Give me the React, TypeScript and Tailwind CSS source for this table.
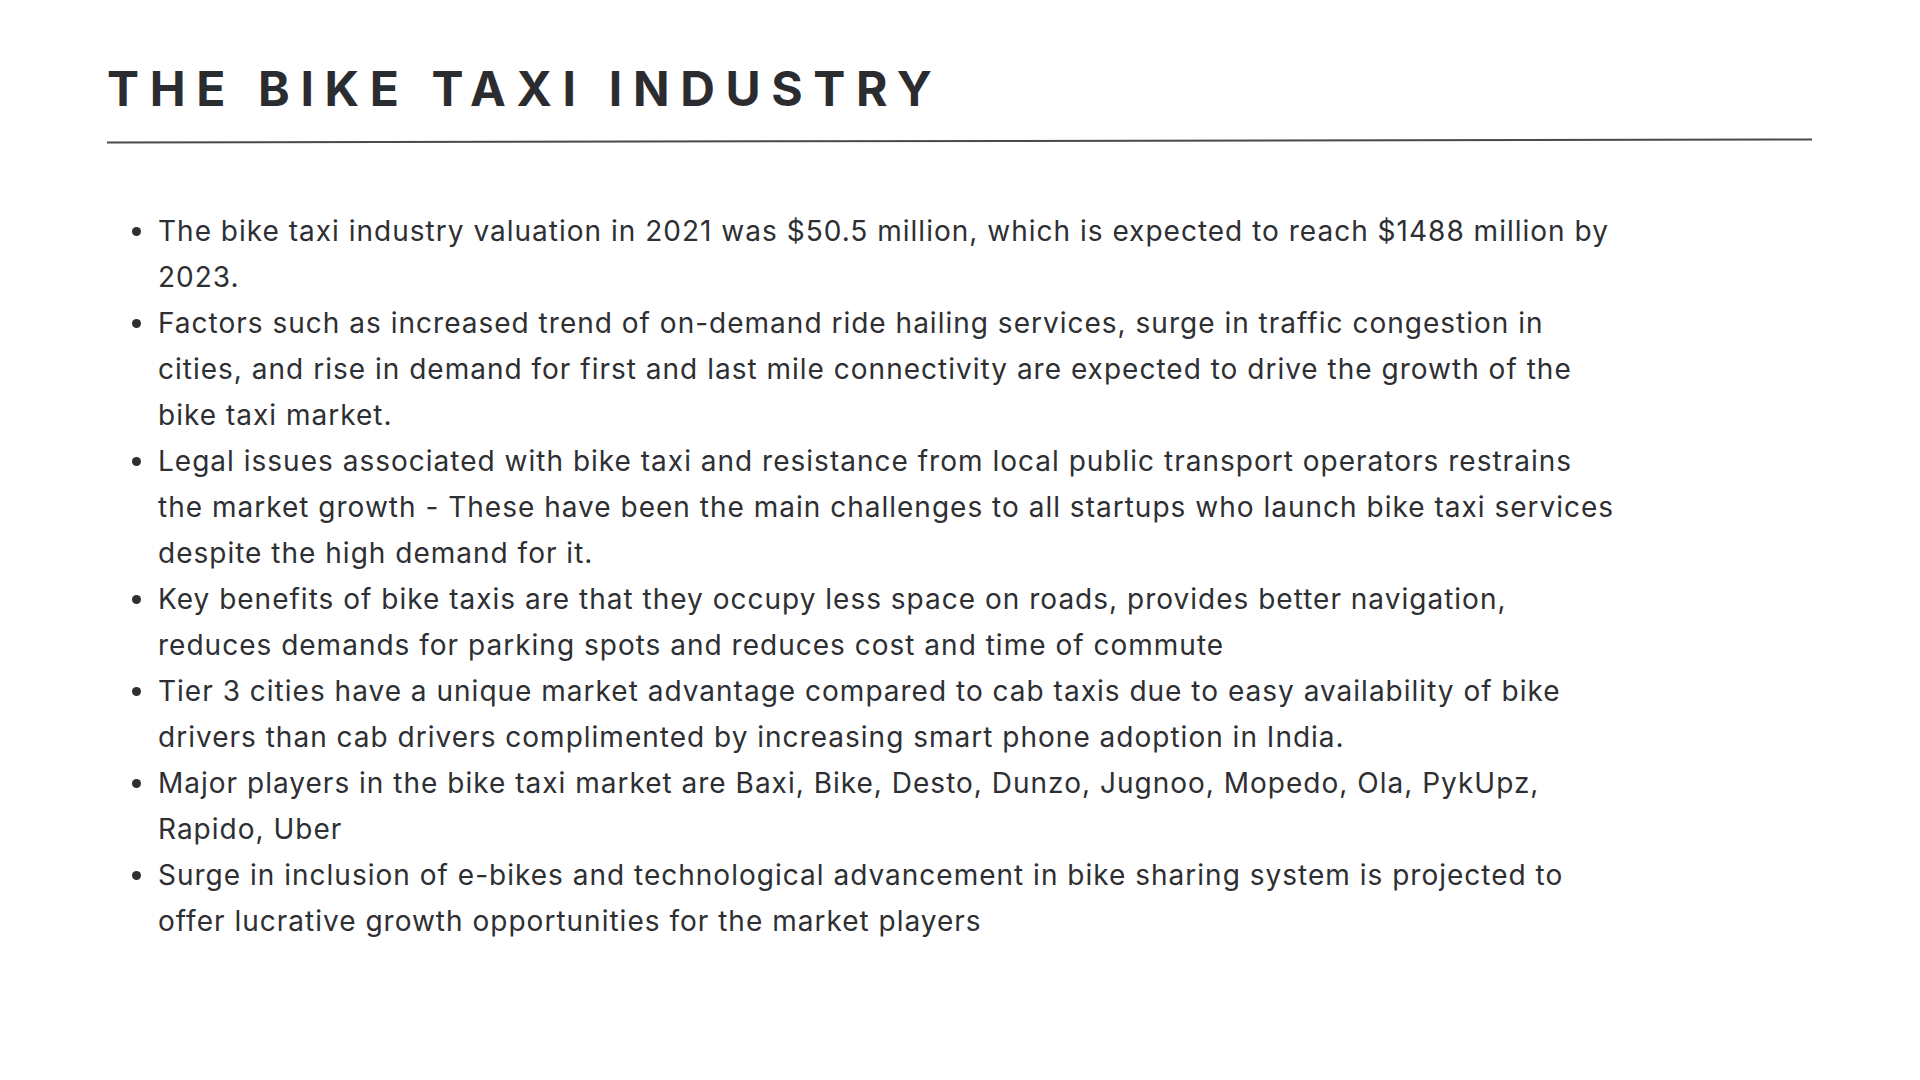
import React from "react";

const items: string[][] = [
  [
    "The bike taxi industry valuation in 2021 was $50.5 million, which is expected to reach $1488 million by",
    "2023.",
  ],
  [
    "Factors such as increased trend of on-demand ride hailing services, surge in traffic congestion in",
    "cities, and rise in demand for first and last mile connectivity are expected to drive the growth of the",
    "bike taxi market.",
  ],
  [
    "Legal issues associated with bike taxi and resistance from local public transport operators restrains",
    "the market growth - These have been the main challenges to all startups who launch bike taxi services",
    "despite the high demand for it.",
  ],
  [
    "Key benefits of bike taxis are that they occupy less space on roads, provides better navigation,",
    "reduces demands for parking spots and reduces cost and time of commute",
  ],
  [
    "Tier 3 cities have a unique market advantage compared to cab taxis due to easy availability of bike",
    "drivers than cab drivers complimented by increasing smart phone adoption in India.",
  ],
  [
    "Major players in the bike taxi market are Baxi, Bike, Desto, Dunzo, Jugnoo, Mopedo, Ola, PykUpz,",
    "Rapido, Uber",
  ],
  [
    "Surge in inclusion of e-bikes and technological advancement in bike sharing system is projected to",
    "offer lucrative growth opportunities for the market players",
  ],
];

export default function App() {
  return (
    <div className="w-[1920px] h-[1080px] bg-white overflow-hidden font-['Inter',sans-serif]">
      <div className="pl-[107px] pr-[108px] pt-[65px]">
        <h1 className="text-[48px] leading-[48px] font-bold tracking-[0.222em] text-[#2b2c30] whitespace-nowrap">
          THE BIKE TAXI INDUSTRY
        </h1>
        <div className="mt-[27px] h-[2px] bg-[#4a4a4a] -rotate-[0.1deg]" />
      </div>

      <ul className="mt-[66px] pl-[158px] flex flex-col">
        {items.map((lines, i) => (
          <li
            key={i}
            className="relative text-[28px] leading-[46px] tracking-[0.036em] text-[#2d2f33] whitespace-nowrap"
          >
            <span className="absolute -left-[26px] top-[19px] w-[9px] h-[9px] rounded-full bg-[#2d2f33]" />
            {lines.map((l, j) => (
              <div key={j}>{l}</div>
            ))}
          </li>
        ))}
      </ul>
    </div>
  );
}
